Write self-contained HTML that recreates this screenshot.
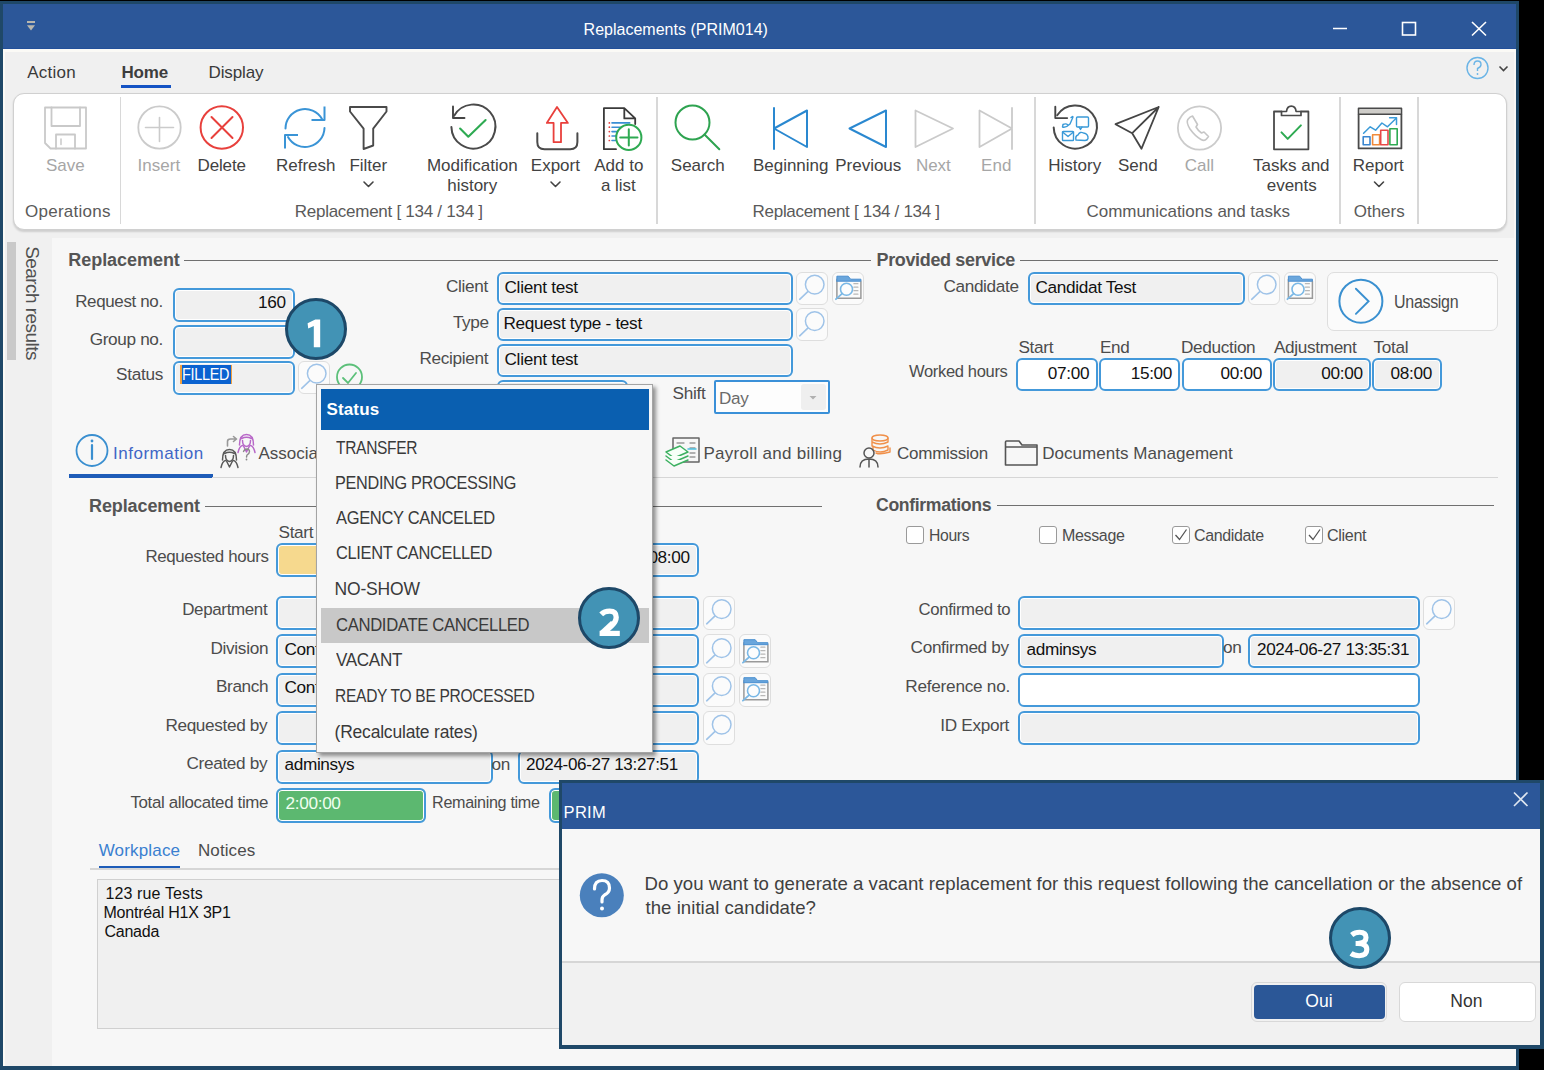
<!DOCTYPE html>
<html><head><meta charset="utf-8">
<style>
*{margin:0;padding:0;box-sizing:border-box}
html,body{width:1544px;height:1070px;overflow:hidden;background:#000}
body{position:relative;font-family:"Liberation Sans",sans-serif}
.a{position:absolute}
.t{position:absolute;white-space:nowrap;line-height:20px;height:20px}
svg{position:absolute;overflow:visible}
.fld{position:absolute;border:2px solid #4499da;border-radius:6px;background:#f0f0f0;box-shadow:inset 0 0 0 1px #fff}
.fw{background:#fff}
.btn{position:absolute;border:1.5px solid #dedede;border-radius:6px;background:#fbfbfb}
.line{position:absolute;height:1.5px;background:#707070}
.badge{position:absolute;width:62px;height:62px;border-radius:50%;background:#4293b5;border:3.5px solid #1d4868;color:#fff;font-weight:bold;font-size:38.5px;line-height:64px;text-align:center}
</style></head><body>
<div class="a" style="left:0;top:1px;width:1519px;height:1069px;background:#1f4868"></div>
<div class="a" style="left:3px;top:4px;width:1513px;height:1062px;background:#f7f7f7"></div>
<div class="a" style="left:3px;top:4px;width:1513px;height:45px;background:#2c5799"></div>
<div class="a" style="left:3px;top:48px;width:1513px;height:1px;background:#23509a"></div>
<div class="a" style="left:3px;top:49px;width:1513px;height:3px;background:#fbfaf6"></div>
<div class="a" style="left:3px;top:52px;width:1511px;height:186px;background:#f0f0f0"></div>
<div class="t" style="left:583.6px;top:19.5px;font-size:16px;color:#fff;letter-spacing:0.01px">Replacements (PRIM014)</div>
<svg style="left:0;top:0" width="1544" height="100">
 <rect x="27" y="21" width="8" height="2" fill="#b9b7ae"/>
 <path d="M27 25.2 L35 25.2 L31 30.4Z" fill="#b9b7ae"/>
 <line x1="1333" y1="28.5" x2="1347" y2="28.5" stroke="#fff" stroke-width="1.5"/>
 <rect x="1402.5" y="22.5" width="13" height="12.5" fill="none" stroke="#fff" stroke-width="1.6"/>
 <path d="M1472 22 L1486 35.5 M1486 22 L1472 35.5" stroke="#fff" stroke-width="1.6"/>
 <circle cx="1477.5" cy="68" r="10.5" fill="none" stroke="#6ab4e6" stroke-width="1.4"/>
 <path d="M1474 65 Q1474 61 1477.5 61 Q1481 61 1481 64.5 Q1481 67 1477.5 68.5 L1477.5 71" fill="none" stroke="#6ab4e6" stroke-width="1.4"/>
 <circle cx="1477.5" cy="74" r="0.9" fill="#6ab4e6"/>
 <path d="M1499.5 66.5 L1503.5 70.5 L1507.5 66.5" fill="none" stroke="#444" stroke-width="1.6"/>
</svg>
<div class="t" style="left:27.2px;top:63.1px;font-size:17px;color:#3a3a3a;letter-spacing:0.24px">Action</div>
<div class="t" style="left:121.4px;top:63.1px;font-size:17px;color:#3d3d3d;font-weight:bold;letter-spacing:-0.13px">Home</div>
<div class="a" style="left:120.5px;top:85px;width:50.5px;height:3px;background:#1553c4"></div>
<div class="t" style="left:208.5px;top:63.1px;font-size:17px;color:#3a3a3a;letter-spacing:-0.12px">Display</div>
<div class="a" style="left:13px;top:92.5px;width:1494px;height:137.5px;background:#fff;border:1.5px solid #d0d0d0;border-radius:11px;box-shadow:0 1.5px 2px rgba(0,0,0,.14)"></div>
<div class="a" style="left:119.5px;top:97px;width:1.5px;height:127px;background:#d8d8d8"></div>
<div class="a" style="left:656px;top:97px;width:1.5px;height:127px;background:#d8d8d8"></div>
<div class="a" style="left:1034px;top:97px;width:1.5px;height:127px;background:#d8d8d8"></div>
<div class="a" style="left:1339px;top:97px;width:1.5px;height:127px;background:#d8d8d8"></div>
<div class="a" style="left:1417px;top:97px;width:1.5px;height:127px;background:#d8d8d8"></div>
<svg style="left:0;top:0" width="1544" height="240" fill="none" stroke-linecap="round" stroke-linejoin="round">
 <!-- save -->
 <path d="M45 107.5 H86 V148.5 H50.5 L45 143 Z" stroke="#c9c9c9" stroke-width="1.8"/>
 <path d="M51.5 107.5 V126 H80 V107.5" stroke="#c9c9c9" stroke-width="1.8"/>
 <path d="M56 148.5 V134.5 H75 V148.5" stroke="#c9c9c9" stroke-width="1.8"/>
 <path d="M61 139 V144.5" stroke="#c9c9c9" stroke-width="1.5"/>
 <!-- insert -->
 <circle cx="159.5" cy="127.5" r="21.2" stroke="#cbcbcb" stroke-width="1.8"/>
 <path d="M145.5 127.5 H173.5 M159.5 117.5 V141.5" stroke="#cbcbcb" stroke-width="1.6"/>
 <!-- delete -->
 <circle cx="221.8" cy="127.5" r="21.2" stroke="#e8403c" stroke-width="2"/>
 <path d="M211.5 117 L232.5 138 M232.5 117 L211.5 138" stroke="#e8403c" stroke-width="2"/>
 <!-- refresh -->
 <path d="M285.5 128.5 A19.5 19.5 0 0 1 322 119" stroke="#3a94d6" stroke-width="2"/>
 <path d="M324.5 106.5 V120 H311.5" stroke="#3a94d6" stroke-width="2" stroke-linecap="butt"/>
 <path d="M324.5 128 A19.5 19.5 0 0 1 288 137" stroke="#3a94d6" stroke-width="2"/>
 <path d="M285 148.5 V135 H298" stroke="#3a94d6" stroke-width="2" stroke-linecap="butt"/>
 <!-- filter -->
 <path d="M350 107 H386.5 V111.5 L373.2 128.7 V145.5 L363.6 149 V128.7 L350 111.5 Z" stroke="#4a4a4a" stroke-width="1.9"/>
 <path d="M364 182 L368.5 186.5 L373 182" stroke="#444" stroke-width="1.6"/>
 <!-- modification history -->
 <path d="M454.3 115.6 A22 22 0 1 1 451.4 127" stroke="#4a4a4a" stroke-width="2"/>
 <path d="M453 106.5 V118 H464.5" stroke="#454545" stroke-width="1.9"/>
 <path d="M460.1 128.6 L468.3 136.7 L485.6 120.1" stroke="#2eaa52" stroke-width="2.1"/>
 <!-- export -->
 <path d="M557 107 L567.9 122.9 H561 V142.2 H553.6 V122.9 H546.8 Z" stroke="#e9403c" stroke-width="1.8"/>
 <path d="M537.3 133.3 V142 Q537.3 149.2 544.5 149.2 H570.2 Q577.4 149.2 577.4 142 V133.3" stroke="#4a4a4a" stroke-width="2"/>
 <path d="M551 182 L555.5 186.5 L560 182" stroke="#444" stroke-width="1.6"/>
 <!-- add to list -->
 <path d="M624.3 108.2 H603.9 V149.2 H616 M635.2 124 V118.4 L624.3 108.2 V118.4 H635.2" stroke="#3a3a3a" stroke-width="1.8"/>
 <path d="M612 122.9 H629.7 M612 127.2 H629.7 M612 131.6 H620 M612 136 H617 M612 140.5 H616" stroke="#3a8fd4" stroke-width="1.6"/>
 <path d="M609.3 122.9 h0.1 M609.3 127.2 h0.1 M609.3 131.6 h0.1 M609.3 136 h0.1 M609.3 140.5 h0.1" stroke="#e84040" stroke-width="1.7"/>
 <circle cx="628.8" cy="137.4" r="12.6" fill="#fff" stroke="#2eaa52" stroke-width="2"/>
 <path d="M620.2 137.4 H637.5 M628.8 129.2 V145.6" stroke="#2eaa52" stroke-width="2"/>
 <!-- search -->
 <circle cx="692.5" cy="122.5" r="17" stroke="#2ea350" stroke-width="2"/>
 <path d="M704.5 134.5 L719.3 149.3" stroke="#2ea350" stroke-width="2"/>
 <!-- beginning -->
 <path d="M774 108 V149" stroke="#2a88d0" stroke-width="2"/>
 <path d="M774 128.5 L807 110.5 V147 Z" stroke="#2a88d0" stroke-width="2"/>
 <!-- previous -->
 <path d="M849.5 128.5 L886 110.5 V147 Z" stroke="#2a88d0" stroke-width="2"/>
 <!-- next -->
 <path d="M953 128.5 L915.5 110.5 V147 Z" stroke="#cacaca" stroke-width="1.8"/>
 <!-- end -->
 <path d="M1012 128.5 L979.5 110.5 V147 Z M1012 108 V149" stroke="#cacaca" stroke-width="1.8"/>
 <!-- history -->
 <path d="M1057.2 115.2 A21.6 21.6 0 1 1 1053.7 127.4" stroke="#4a4a4a" stroke-width="2"/>
 <path d="M1055.3 106.8 V118.1 H1067.2" stroke="#454545" stroke-width="1.9"/>
 <g stroke="#3a9ad8" stroke-width="1.4">
  <rect x="1076.5" y="117" width="12" height="10" rx="1"/>
  <path d="M1079 127 L1080.5 129.5 L1082 127"/>
  <path d="M1073 117 L1070 124 Q1066 128 1062.5 127 L1063 124.5 Q1066 123 1068 125 M1071 117.5 L1072.5 116.5"/>
  <rect x="1062.5" y="131.5" width="11" height="9" rx="0.8"/>
  <path d="M1062.5 132 L1068 136.5 L1073.5 132"/>
  <path d="M1076 140 Q1075 136 1078 135 Q1080 131 1083.5 133 Q1088.5 134 1088 138.5 Q1087.5 140.5 1085 140.5 Z"/>
 </g>
 <!-- send -->
 <path d="M1115.5 124.2 L1158.7 107 L1141.5 148.7 L1132.2 133.2 Z M1132.2 133.2 L1158.7 107" stroke="#454545" stroke-width="1.8"/>
 <!-- call -->
 <circle cx="1199.5" cy="128" r="21.6" stroke="#cbcbcb" stroke-width="1.8"/>
 <path d="M1192.5 116 Q1190 116.5 1187.8 119.5 Q1186 122.5 1190 129 Q1195 136 1201 139.5 Q1204.5 141.5 1206.5 139 L1208.5 136.5 L1204 132 L1201.5 133 Q1198 130.5 1196 127 L1197.5 124.5 Z" stroke="#c6c6c6" stroke-width="1.6"/>
  <!-- tasks -->
 <path d="M1281.5 111.5 H1274 V149.3 H1308.4 V111.5 H1301" stroke="#4a4a4a" stroke-width="1.8"/>
 <path d="M1281.5 111.5 H1286.5 Q1287 106.2 1291.3 106.2 Q1295.6 106.2 1296.1 111.5 H1301 V115.5 H1281.5 Z" stroke="#4a4a4a" stroke-width="1.7"/>
 <path d="M1281.5 132.4 L1287.7 138.9 L1300.9 125.4" stroke="#2eaa52" stroke-width="2"/>
 <!-- report -->
 <rect x="1358.6" y="108.4" width="42.8" height="40" stroke="#4a4a4a" stroke-width="1.8"/>
 <rect x="1359.5" y="109.3" width="41" height="4.8" fill="#cfcdc9" stroke="none"/>
 <path d="M1358.6 114.3 H1401.4" stroke="#4a4a4a" stroke-width="1.6"/>
 <path d="M1363.6 133.3 L1370.2 126.8 L1375.6 130.2 L1381.9 123 L1387.5 126.8 L1396.2 118.2" stroke="#3a9ad8" stroke-width="1.5"/>
 <path d="M1389.6 117.8 H1396.5 V124.4" stroke="#3a9ad8" stroke-width="1.5"/>
 <rect x="1363.2" y="136.8" width="6.8" height="8" stroke="#3a86d0" stroke-width="1.6"/>
 <rect x="1372.6" y="134.8" width="7" height="10" stroke="#f08a3a" stroke-width="1.6"/>
 <rect x="1380.7" y="130.3" width="7.3" height="14.5" stroke="#e84848" stroke-width="1.6"/>
 <rect x="1389.9" y="128.7" width="7.3" height="16.1" stroke="#2eaa52" stroke-width="1.6"/>
 <path d="M1374.5 182 L1379 186.5 L1383.5 182" stroke="#444" stroke-width="1.6"/>
</svg>
<div class="t" style="left:45.9px;top:156.1px;font-size:17px;color:#a6a6a6">Save</div>
<div class="t" style="left:137.6px;top:156.1px;font-size:17px;color:#a6a6a6">Insert</div>
<div class="t" style="left:197.5px;top:156.1px;font-size:17px;color:#424242;letter-spacing:-0.14px">Delete</div>
<div class="t" style="left:276.0px;top:156.1px;font-size:17px;color:#424242">Refresh</div>
<div class="t" style="left:349.4px;top:156.1px;font-size:17px;color:#424242">Filter</div>
<div class="t" style="left:426.9px;top:156.1px;font-size:17px;color:#424242">Modification</div>
<div class="t" style="left:530.8px;top:156.1px;font-size:17px;color:#424242">Export</div>
<div class="t" style="left:594.2px;top:156.1px;font-size:17px;color:#424242">Add to</div>
<div class="t" style="left:670.8px;top:156.1px;font-size:17px;color:#424242">Search</div>
<div class="t" style="left:752.9px;top:156.1px;font-size:17px;color:#424242">Beginning</div>
<div class="t" style="left:835.2px;top:156.1px;font-size:17px;color:#424242">Previous</div>
<div class="t" style="left:915.9px;top:156.1px;font-size:17px;color:#a6a6a6">Next</div>
<div class="t" style="left:981.1px;top:156.1px;font-size:17px;color:#a6a6a6">End</div>
<div class="t" style="left:1048.3px;top:156.1px;font-size:17px;color:#424242">History</div>
<div class="t" style="left:1117.9px;top:156.1px;font-size:17px;color:#424242">Send</div>
<div class="t" style="left:1184.7px;top:156.1px;font-size:17px;color:#a6a6a6">Call</div>
<div class="t" style="left:1253.0px;top:156.1px;font-size:17px;color:#424242">Tasks and</div>
<div class="t" style="left:1352.8px;top:156.1px;font-size:17px;color:#424242">Report</div>
<div class="t" style="left:447.2px;top:175.6px;font-size:17px;color:#424242">history</div>
<div class="t" style="left:600.9px;top:175.6px;font-size:17px;color:#424242">a list</div>
<div class="t" style="left:1266.7px;top:175.6px;font-size:17px;color:#424242">events</div>
<div class="t" style="left:25.0px;top:201.6px;font-size:17px;color:#5a5a5a;letter-spacing:0.26px">Operations</div>
<div class="t" style="left:294.8px;top:201.6px;font-size:17px;color:#5a5a5a;letter-spacing:-0.27px">Replacement [ 134 / 134 ]</div>
<div class="t" style="left:752.6px;top:201.6px;font-size:17px;color:#5a5a5a;letter-spacing:-0.30px">Replacement [ 134 / 134 ]</div>
<div class="t" style="left:1086.5px;top:201.6px;font-size:17px;color:#5a5a5a;letter-spacing:-0.03px">Communications and tasks</div>
<div class="t" style="left:1353.7px;top:201.6px;font-size:17px;color:#5a5a5a">Others</div>
<div class="a" style="left:3px;top:238px;width:49px;height:828px;background:#f0f0f0"></div>
<div class="a" style="left:3px;top:52px;width:1.5px;height:1014px;background:#fbfaf6"></div>
<div class="a" style="left:7px;top:242px;width:8.5px;height:118px;background:#c9c9c9"></div>
<div class="a" style="left:32.2px;top:302.5px;width:0;height:0"><div style="position:absolute;left:-70px;top:-10px;width:140px;height:20px;text-align:center;transform:rotate(90deg);color:#505050;font-size:19px;line-height:20px;white-space:nowrap;letter-spacing:-0.55px">Search results</div></div>
<div class="t" style="left:68.3px;top:249.8px;font-size:18px;color:#555;font-weight:bold;letter-spacing:-0.05px">Replacement</div>
<div class="line" style="left:184px;top:259.5px;width:687px"></div>
<div class="t" style="left:876.5px;top:249.8px;font-size:18px;color:#555;font-weight:bold;letter-spacing:-0.35px">Provided service</div>
<div class="line" style="left:1020px;top:259.5px;width:478px"></div>
<div class="t" style="left:74.2px;top:291.4px;font-size:17.2px;color:#4c4c4c;letter-spacing:-0.35px;transform:scaleX(0.987);transform-origin:88.4px 50%">Request no.</div>
<div class="t" style="left:89.7px;top:328.5px;font-size:17.2px;color:#4c4c4c;letter-spacing:-0.35px">Group no.</div>
<div class="t" style="left:116.1px;top:364.0px;font-size:17.2px;color:#4c4c4c;letter-spacing:-0.32px">Status</div>
<div class="fld" style="left:172.5px;top:287.6px;width:122.5px;height:34.4px"></div>
<div class="fld" style="left:172.5px;top:324.9px;width:122.5px;height:33.8px"></div>
<div class="fld" style="left:172.5px;top:360.7px;width:122.5px;height:34.3px"></div>
<div class="t" style="left:258.0px;top:292.0px;font-size:17.2px;color:#111;letter-spacing:-0.35px">160</div>
<div class="a" style="left:181px;top:365px;width:50px;height:19px;background:#0a62d0"></div>
<div class="a" style="left:180px;top:365px;width:1.5px;height:19px;background:#f0a040"></div><div class="a" style="left:230.5px;top:365px;width:1.5px;height:19px;background:#f0a040"></div>
<div class="t" style="left:182.0px;top:365.0px;font-size:16px;color:#fff;letter-spacing:-0.35px;transform:scaleX(0.903);transform-origin:1.0px 50%">FILLED</div>
<div class="btn" style="left:298px;top:361px;width:32px;height:33px"></div>
<div class="t" style="left:446.0px;top:276.0px;font-size:17.2px;color:#4c4c4c;letter-spacing:-0.31px">Client</div>
<div class="t" style="left:452.9px;top:312.0px;font-size:17.2px;color:#4c4c4c;letter-spacing:-0.35px">Type</div>
<div class="t" style="left:419.4px;top:348.0px;font-size:17.2px;color:#4c4c4c;letter-spacing:-0.33px">Recipient</div>
<div class="fld" style="left:497px;top:271.5px;width:296px;height:33.4px"></div>
<div class="fld" style="left:497px;top:307.8px;width:296px;height:33.3px"></div>
<div class="fld" style="left:497px;top:344px;width:296px;height:33.3px"></div>
<div class="fld" style="left:497px;top:380.2px;width:131px;height:33.5px"></div>
<div class="t" style="left:504.5px;top:276.5px;font-size:17.2px;color:#111;letter-spacing:-0.29px">Client test</div>
<div class="t" style="left:503.5px;top:312.5px;font-size:17.2px;color:#111;letter-spacing:-0.31px">Request type - test</div>
<div class="t" style="left:504.5px;top:349.0px;font-size:17.2px;color:#111;letter-spacing:-0.29px">Client test</div>
<div class="btn" style="left:796px;top:271.5px;width:32px;height:33.4px"></div>
<div class="btn" style="left:832px;top:271.5px;width:32px;height:33.4px"></div>
<div class="btn" style="left:796px;top:307.8px;width:32px;height:33.3px"></div>
<div class="t" style="left:672.6px;top:383.0px;font-size:17.2px;color:#4c4c4c;letter-spacing:-0.30px">Shift</div>
<div class="a" style="left:714.2px;top:380px;width:115.4px;height:33.7px;border:2px solid #3a90d8;border-radius:2px;background:#fdfdfd"></div>
<div class="a" style="left:801px;top:383.5px;width:24.5px;height:26.5px;background:#efefef;border-radius:3px"></div>
<svg style="left:0;top:0" width="1" height="1"><path d="M809.5 396 L816.5 396 L813 399.5Z" fill="#b0b0b0"/></svg>
<div class="t" style="left:718.5px;top:387.5px;font-size:17.2px;color:#6a6a6a;letter-spacing:-0.35px;transform:scaleX(0.994);transform-origin:1.0px 50%">Day</div>
<div class="t" style="left:943.4px;top:275.5px;font-size:17.2px;color:#4c4c4c;letter-spacing:-0.34px">Candidate</div>
<div class="fld" style="left:1028px;top:271.5px;width:217px;height:33.5px"></div>
<div class="t" style="left:1035.5px;top:276.5px;font-size:17.2px;color:#111;letter-spacing:-0.33px">Candidat Test</div>
<div class="btn" style="left:1248px;top:271.5px;width:32px;height:33.5px"></div>
<div class="btn" style="left:1283.5px;top:271.5px;width:32px;height:33.5px"></div>
<div class="btn" style="left:1327.4px;top:272.3px;width:170.5px;height:59px;border-radius:7px"></div>
<div class="t" style="left:1393.5px;top:292.4px;font-size:18px;color:#4c4c4c;letter-spacing:-0.35px;transform:scaleX(0.888);transform-origin:1.0px 50%">Unassign</div>
<div class="t" style="left:905.4px;top:360.5px;font-size:17.2px;color:#4c4c4c;letter-spacing:-0.35px;transform:scaleX(0.961);transform-origin:102.2px 50%">Worked hours</div>
<div class="t" style="left:1018.4px;top:337.0px;font-size:17.2px;color:#4c4c4c;letter-spacing:-0.32px">Start</div>
<div class="t" style="left:1100.0px;top:337.0px;font-size:17.2px;color:#4c4c4c;letter-spacing:-0.35px;transform:scaleX(0.995);transform-origin:1.0px 50%">End</div>
<div class="t" style="left:1181.0px;top:337.0px;font-size:17.2px;color:#4c4c4c;letter-spacing:-0.34px">Deduction</div>
<div class="t" style="left:1274.0px;top:337.0px;font-size:17.2px;color:#4c4c4c;letter-spacing:-0.35px">Adjustment</div>
<div class="t" style="left:1373.6px;top:337.0px;font-size:17.2px;color:#4c4c4c;letter-spacing:-0.32px">Total</div>
<div class="fld" style="left:1016px;top:357.5px;width:82px;height:33.5px;background:#fff"></div>
<div class="fld" style="left:1099px;top:357.5px;width:81px;height:33.5px;background:#fff"></div>
<div class="fld" style="left:1181.5px;top:357.5px;width:90px;height:33.5px;background:#fff"></div>
<div class="fld" style="left:1273px;top:357.5px;width:98px;height:33.5px"></div>
<div class="fld" style="left:1372px;top:357.5px;width:70px;height:33.5px"></div>
<div class="t" style="left:1047.8px;top:362.5px;font-size:17.2px;color:#111;letter-spacing:-0.33px">07:00</div>
<div class="t" style="left:1130.7px;top:362.5px;font-size:17.2px;color:#111;letter-spacing:-0.33px">15:00</div>
<div class="t" style="left:1220.6px;top:362.5px;font-size:17.2px;color:#111;letter-spacing:-0.33px">00:00</div>
<div class="t" style="left:1321.3px;top:362.5px;font-size:17.2px;color:#111;letter-spacing:-0.33px">00:00</div>
<div class="t" style="left:1390.6px;top:362.5px;font-size:17.2px;color:#111;letter-spacing:-0.33px">08:00</div>
<svg style="left:0;top:0" width="1544" height="1070" fill="none" stroke-linecap="round" stroke-linejoin="round">
 <circle cx="92" cy="450.5" r="15.5" stroke="#3a8fd0" stroke-width="1.8"/>
 <path d="M92 445 V459" stroke="#3a8fd0" stroke-width="2.2"/>
 <circle cx="92" cy="441" r="1.4" fill="#3a8fd0"/>
 <!-- association -->
<g stroke="#5a5a5a" stroke-width="1.5" transform="translate(0 0)">
  <path d="M222.5 460 Q222.5 449.5 229.5 449.5 Q236.5 449.5 236.5 460"/>
  <path d="M224.5 453.5 Q229.5 450.8 234.5 453.5"/>
  <path d="M225.5 455.5 Q225.5 461 229.5 461.5 Q233.5 461 233.5 455.5"/>
  <path d="M221 467.5 Q222.5 461 225.5 460.5 M238 467.5 Q236.5 461 233.5 460.5 M226.5 461 L229.5 467 L232.5 461"/>
 </g><g stroke="#b868c8" stroke-width="1.5" transform="translate(17 -15)">
  <path d="M222.5 460 Q222.5 449.5 229.5 449.5 Q236.5 449.5 236.5 460"/>
  <path d="M224.5 453.5 Q229.5 450.8 234.5 453.5"/>
  <path d="M225.5 455.5 Q225.5 461 229.5 461.5 Q233.5 461 233.5 455.5"/>
  <path d="M221 467.5 Q222.5 461 225.5 460.5 M238 467.5 Q236.5 461 233.5 460.5 M226.5 461 L229.5 467 L232.5 461"/>
 </g>
 <path d="M227.5 446 V441.5 Q227.5 439 230.5 439 H236 M233.5 436.5 L236.5 439 L233.5 441.5" stroke="#999" stroke-width="1.6"/>
 <path d="M243.5 451.5 Q244.5 449 247 449 Q249.5 449.2 249.5 451.5 Q249.5 453.5 247 455 L246.5 457" stroke="#8a8a8a" stroke-width="1.4"/>
 <circle cx="246.5" cy="459.5" r="0.9" fill="#8a8a8a"/>
<!-- payroll -->
 <rect x="673" y="438" width="26" height="24" stroke="#666" stroke-width="1.5"/>
 <path d="M677 443 H684 M690 443 H695 M690 448 H695 M690 453 H695 M690 457 H695" stroke="#999" stroke-width="1.3"/>
 <path d="M688 449 H696" stroke="#4ac0e0" stroke-width="1.5"/>
 <g stroke="#3cb060" stroke-width="1.5" fill="#f7fff8">
  <path d="M666 452 L680 446 L688 452 L674 458Z"/>
  <path d="M666 456 L674 462 L688 456"/>
  <path d="M666 460 L674 466 L688 460"/>
 </g>
 <!-- commission -->
 <g stroke="#f0904a" stroke-width="1.4">
  <ellipse cx="880" cy="438" rx="8" ry="3"/>
  <path d="M872 438 V442 Q880 446 888 442 V438 M872 442 V446 Q880 450 888 446 M873 446 V450 Q880 454 888 450 V446 M876 453 Q880 455 890 452 V448"/>
 </g>
 <g stroke="#555" stroke-width="1.5">
  <circle cx="869" cy="453" r="5"/>
  <path d="M860 467 Q860 459 869 459 Q878 459 878 467 M869 460 V467"/>
 </g>
 <!-- folder -->
 <path d="M1005.5 447 V465 H1037 V445 H1022 L1019 441 H1006.5 Q1005.5 441 1005.5 442 V447 H1037" stroke="#555" stroke-width="1.6"/>
</svg>
<div class="t" style="left:113.0px;top:443.6px;font-size:17px;color:#3f66c6;letter-spacing:0.51px">Information</div>
<div class="a" style="left:68.5px;top:474px;width:144px;height:4px;background:#1e5cb8"></div>
<div class="a" style="left:212px;top:476.5px;width:1286px;height:1.5px;background:#d6d6d6"></div>
<div class="t" style="left:258.4px;top:443.6px;font-size:17px;color:#4c4c4c">Association</div>
<div class="t" style="left:703.4px;top:443.6px;font-size:17px;color:#4c4c4c;letter-spacing:0.30px">Payroll and billing</div>
<div class="t" style="left:897.0px;top:443.6px;font-size:17px;color:#4c4c4c;letter-spacing:-0.25px">Commission</div>
<div class="t" style="left:1042.3px;top:443.6px;font-size:17px;color:#4c4c4c;letter-spacing:0.03px">Documents Management</div>
<div class="t" style="left:89.0px;top:495.8px;font-size:18px;color:#555;font-weight:bold;letter-spacing:-0.10px">Replacement</div>
<div class="line" style="left:205px;top:505.5px;width:617px"></div>
<div class="t" style="left:876.0px;top:494.8px;font-size:18px;color:#555;font-weight:bold;letter-spacing:-0.35px;transform:scaleX(0.980);transform-origin:0.0px 50%">Confirmations</div>
<div class="line" style="left:997px;top:504.5px;width:497px"></div>
<div class="t" style="left:278.5px;top:522.0px;font-size:17.2px;color:#4c4c4c;letter-spacing:-0.32px">Start</div>
<div class="t" style="left:142.6px;top:546.0px;font-size:17.2px;color:#4c4c4c;letter-spacing:-0.35px;transform:scaleX(0.981);transform-origin:125.4px 50%">Requested hours</div>
<div class="t" style="left:181.1px;top:599.0px;font-size:17.2px;color:#4c4c4c;letter-spacing:-0.35px;transform:scaleX(0.986);transform-origin:86.9px 50%">Department</div>
<div class="t" style="left:210.4px;top:638.0px;font-size:17.2px;color:#4c4c4c;letter-spacing:-0.29px">Division</div>
<div class="t" style="left:215.9px;top:676.0px;font-size:17.2px;color:#4c4c4c;letter-spacing:-0.35px">Branch</div>
<div class="t" style="left:165.4px;top:714.5px;font-size:17.2px;color:#4c4c4c;letter-spacing:-0.35px">Requested by</div>
<div class="t" style="left:186.5px;top:753.0px;font-size:17.2px;color:#4c4c4c;letter-spacing:-0.34px">Created by</div>
<div class="t" style="left:128.1px;top:791.5px;font-size:17.2px;color:#4c4c4c;letter-spacing:-0.35px;transform:scaleX(0.983);transform-origin:139.9px 50%">Total allocated time</div>
<div class="fld" style="left:276px;top:542.5px;width:140px;height:34.3px;background:#f6d98e"></div>
<div class="fld" style="left:560px;top:542.5px;width:139px;height:34.3px"></div>
<div class="t" style="left:648.4px;top:547.0px;font-size:17.2px;color:#111;letter-spacing:-0.33px">08:00</div>
<div class="fld" style="left:276px;top:595.7px;width:422.5px;height:34.4px"></div>
<div class="fld" style="left:276px;top:634.1px;width:422.5px;height:34.4px"></div>
<div class="fld" style="left:276px;top:672.7px;width:422.5px;height:34.3px"></div>
<div class="fld" style="left:276px;top:711.1px;width:422.5px;height:34.4px"></div>
<div class="t" style="left:284.5px;top:639.0px;font-size:17.2px;color:#111;letter-spacing:-0.32px">Confirmation</div>
<div class="t" style="left:284.5px;top:677.0px;font-size:17.2px;color:#111;letter-spacing:-0.32px">Confirmation</div>
<div class="fld" style="left:276px;top:749.6px;width:217px;height:34.4px"></div>
<div class="t" style="left:284.5px;top:754.0px;font-size:17.2px;color:#111;letter-spacing:-0.35px">adminsys</div>
<div class="t" style="left:491.5px;top:753.5px;font-size:17.2px;color:#4c4c4c;letter-spacing:-0.35px">on</div>
<div class="fld" style="left:517.5px;top:749.6px;width:181px;height:34.4px"></div>
<div class="t" style="left:526.4px;top:754.0px;font-size:17.2px;color:#111;letter-spacing:-0.35px;transform:scaleX(0.993);transform-origin:0.0px 50%">2024-06-27 13:27:51</div>
<div class="fld" style="left:276px;top:788.2px;width:149.5px;height:34.4px;background:#5cb870"></div>
<div class="t" style="left:285.5px;top:792.5px;font-size:17.2px;color:#f0fff0;letter-spacing:-0.32px">2:00:00</div>
<div class="t" style="left:432.4px;top:791.5px;font-size:17.2px;color:#4c4c4c;letter-spacing:-0.35px;transform:scaleX(0.939);transform-origin:1.0px 50%">Remaining time</div>
<div class="fld" style="left:549px;top:788.2px;width:150px;height:34.4px;background:#5cb870"></div>
<div class="btn" style="left:703px;top:595.9px;width:32px;height:34px"></div>
<div class="btn" style="left:703px;top:634.3px;width:32px;height:34px"></div>
<div class="btn" style="left:739px;top:634.3px;width:32px;height:34px"></div>
<div class="btn" style="left:703px;top:672.9px;width:32px;height:34px"></div>
<div class="btn" style="left:739px;top:672.9px;width:32px;height:34px"></div>
<div class="btn" style="left:703px;top:711.3px;width:32px;height:34px"></div>
<div class="a" style="left:905.5px;top:525.5px;width:18px;height:18.5px;border:1.4px solid #9a9a9a;border-radius:3px;background:#fff"></div>
<div class="a" style="left:1039px;top:525.5px;width:18px;height:18.5px;border:1.4px solid #9a9a9a;border-radius:3px;background:#fff"></div>
<div class="a" style="left:1171.5px;top:525.5px;width:18px;height:18.5px;border:1.4px solid #9a9a9a;border-radius:3px;background:#fff"></div>
<div class="a" style="left:1305px;top:525.5px;width:18px;height:18.5px;border:1.4px solid #9a9a9a;border-radius:3px;background:#fff"></div>
<svg style="left:0;top:0" width="1" height="1" fill="none"><path d="M1175.5 535 L1179.5 539.5 L1186.5 529.5 M1309 535 L1313 539.5 L1320 529.5" stroke="#555" stroke-width="1.3"/></svg>
<div class="t" style="left:928.6px;top:524.9px;font-size:16.3px;color:#4c4c4c;letter-spacing:-0.35px;transform:scaleX(0.966);transform-origin:1.0px 50%">Hours</div>
<div class="t" style="left:1061.6px;top:524.9px;font-size:16.3px;color:#4c4c4c;letter-spacing:-0.35px;transform:scaleX(0.982);transform-origin:1.0px 50%">Message</div>
<div class="t" style="left:1194.4px;top:524.9px;font-size:16.3px;color:#4c4c4c;letter-spacing:-0.35px;transform:scaleX(0.981);transform-origin:0.0px 50%">Candidate</div>
<div class="t" style="left:1327.4px;top:524.9px;font-size:16.3px;color:#4c4c4c;letter-spacing:-0.35px;transform:scaleX(0.991);transform-origin:0.0px 50%">Client</div>
<div class="t" style="left:915.5px;top:599.0px;font-size:17.2px;color:#4c4c4c;letter-spacing:-0.35px;transform:scaleX(0.973);transform-origin:94.0px 50%">Confirmed to</div>
<div class="t" style="left:910.6px;top:637.0px;font-size:17.2px;color:#4c4c4c;letter-spacing:-0.34px">Confirmed by</div>
<div class="t" style="left:905.3px;top:675.5px;font-size:17.2px;color:#4c4c4c;letter-spacing:-0.25px">Reference no.</div>
<div class="t" style="left:940.3px;top:715.0px;font-size:17.2px;color:#4c4c4c;letter-spacing:-0.33px">ID Export</div>
<div class="fld" style="left:1018px;top:595.7px;width:402px;height:34.4px"></div>
<div class="btn" style="left:1423px;top:595.9px;width:32px;height:34px"></div>
<div class="fld" style="left:1018px;top:634.1px;width:206px;height:34.4px"></div>
<div class="t" style="left:1026.5px;top:638.5px;font-size:17.2px;color:#111;letter-spacing:-0.35px">adminsys</div>
<div class="t" style="left:1223.0px;top:636.5px;font-size:17.2px;color:#4c4c4c;letter-spacing:-0.35px">on</div>
<div class="fld" style="left:1248px;top:634.1px;width:172px;height:34.4px"></div>
<div class="t" style="left:1257.0px;top:638.5px;font-size:17.2px;color:#111;letter-spacing:-0.35px;transform:scaleX(0.995);transform-origin:0.0px 50%">2024-06-27 13:35:31</div>
<div class="fld" style="left:1018px;top:672.7px;width:402px;height:34.3px;background:#fff"></div>
<div class="fld" style="left:1018px;top:711.1px;width:402px;height:34.4px"></div>
<div class="t" style="left:98.7px;top:841.1px;font-size:17px;color:#3a7fd0;letter-spacing:0.17px">Workplace</div>
<div class="a" style="left:98.5px;top:865.5px;width:81px;height:4px;background:#1e5cb8"></div>
<div class="a" style="left:89.5px;top:868px;width:1000px;height:1.5px;background:#d6d6d6"></div>
<div class="t" style="left:198.0px;top:841.1px;font-size:17px;color:#4c4c4c;letter-spacing:0.09px">Notices</div>
<div class="a" style="left:97px;top:879px;width:800px;height:150px;background:#f0f0f0;border:1.5px solid #d0d0d0"></div>
<div class="t" style="left:105.5px;top:883.5px;font-size:16px;color:#111;letter-spacing:0.12px">123 rue Tests</div>
<div class="t" style="left:103.5px;top:903.0px;font-size:16px;color:#111;letter-spacing:-0.22px">Montréal H1X 3P1</div>
<div class="t" style="left:104.5px;top:922.0px;font-size:16px;color:#111;letter-spacing:-0.25px">Canada</div>
<svg style="left:0;top:0" width="1544" height="1070" fill="none" stroke-linecap="round"><circle cx="316.7" cy="373.6" r="9.3" stroke="#9fc3e8" stroke-width="1.5"/><path d="M309.8 380.7 L301.7 388.3" stroke="#9fc3e8" stroke-width="1.6"/><circle cx="814.7" cy="284.6" r="9.3" stroke="#9fc3e8" stroke-width="1.5"/><path d="M807.8 291.7 L799.7 299.3" stroke="#9fc3e8" stroke-width="1.6"/><circle cx="814.7" cy="321.1" r="9.3" stroke="#9fc3e8" stroke-width="1.5"/><path d="M807.8 328.2 L799.7 335.8" stroke="#9fc3e8" stroke-width="1.6"/><circle cx="1266.7" cy="284.6" r="9.3" stroke="#9fc3e8" stroke-width="1.5"/><path d="M1259.8 291.7 L1251.7 299.3" stroke="#9fc3e8" stroke-width="1.6"/><circle cx="721.7" cy="609.1" r="9.3" stroke="#9fc3e8" stroke-width="1.5"/><path d="M714.8 616.2 L706.7 623.8" stroke="#9fc3e8" stroke-width="1.6"/><circle cx="721.7" cy="648.1" r="9.3" stroke="#9fc3e8" stroke-width="1.5"/><path d="M714.8 655.2 L706.7 662.8" stroke="#9fc3e8" stroke-width="1.6"/><circle cx="721.7" cy="686.1" r="9.3" stroke="#9fc3e8" stroke-width="1.5"/><path d="M714.8 693.2 L706.7 700.8" stroke="#9fc3e8" stroke-width="1.6"/><circle cx="721.7" cy="724.6" r="9.3" stroke="#9fc3e8" stroke-width="1.5"/><path d="M714.8 731.7 L706.7 739.3" stroke="#9fc3e8" stroke-width="1.6"/><circle cx="1441.7" cy="609.1" r="9.3" stroke="#9fc3e8" stroke-width="1.5"/><path d="M1434.8 616.2 L1426.7 623.8" stroke="#9fc3e8" stroke-width="1.6"/><path d="M836.9 279.2 V298.2 H860.9 V281.2" stroke="#9a9a9a" stroke-width="1.5"/><path d="M836.9 280.7 V276.2 H848.2 L850.6 279.2 H860.9 V281.2 H836.9Z" fill="#6aa6dc" stroke="#4a8fd0" stroke-width="1"/><path d="M853.9 283.7 H857.9 M853.9 287.2 H857.9 M853.9 290.7 H857.9 M853.9 294.2 H857.9" stroke="#b8b8b8" stroke-width="1.3"/><circle cx="846.5" cy="289.2" r="6" fill="#fff" fill-opacity=".6" stroke="#7ab8e6" stroke-width="1.6"/><path d="M842.1 293.7 L835.9 299.2" stroke="#7ab8e6" stroke-width="1.8"/><path d="M1288.4 279.2 V298.2 H1312.4 V281.2" stroke="#9a9a9a" stroke-width="1.5"/><path d="M1288.4 280.7 V276.2 H1299.7 L1302.1 279.2 H1312.4 V281.2 H1288.4Z" fill="#6aa6dc" stroke="#4a8fd0" stroke-width="1"/><path d="M1305.4 283.7 H1309.4 M1305.4 287.2 H1309.4 M1305.4 290.7 H1309.4 M1305.4 294.2 H1309.4" stroke="#b8b8b8" stroke-width="1.3"/><circle cx="1298.0" cy="289.2" r="6" fill="#fff" fill-opacity=".6" stroke="#7ab8e6" stroke-width="1.6"/><path d="M1293.6 293.7 L1287.4 299.2" stroke="#7ab8e6" stroke-width="1.8"/><path d="M743.9 642.7 V661.7 H767.9 V644.7" stroke="#9a9a9a" stroke-width="1.5"/><path d="M743.9 644.2 V639.7 H755.2 L757.6 642.7 H767.9 V644.7 H743.9Z" fill="#6aa6dc" stroke="#4a8fd0" stroke-width="1"/><path d="M760.9 647.2 H764.9 M760.9 650.7 H764.9 M760.9 654.2 H764.9 M760.9 657.7 H764.9" stroke="#b8b8b8" stroke-width="1.3"/><circle cx="753.5" cy="652.7" r="6" fill="#fff" fill-opacity=".6" stroke="#7ab8e6" stroke-width="1.6"/><path d="M749.1 657.2 L742.9 662.7" stroke="#7ab8e6" stroke-width="1.8"/><path d="M743.9 680.7 V699.7 H767.9 V682.7" stroke="#9a9a9a" stroke-width="1.5"/><path d="M743.9 682.2 V677.7 H755.2 L757.6 680.7 H767.9 V682.7 H743.9Z" fill="#6aa6dc" stroke="#4a8fd0" stroke-width="1"/><path d="M760.9 685.2 H764.9 M760.9 688.7 H764.9 M760.9 692.2 H764.9 M760.9 695.7 H764.9" stroke="#b8b8b8" stroke-width="1.3"/><circle cx="753.5" cy="690.7" r="6" fill="#fff" fill-opacity=".6" stroke="#7ab8e6" stroke-width="1.6"/><path d="M749.1 695.2 L742.9 700.7" stroke="#7ab8e6" stroke-width="1.8"/>
 <circle cx="1360.9" cy="301.2" r="21.5" stroke="#3a90d0" stroke-width="2"/>
 <path d="M1355.9 288.7 L1368.6 301.2 L1355.9 313.8" stroke="#3a90d0" stroke-width="1.9"/>
 <circle cx="349.5" cy="377" r="12.5" stroke="#5cc07a" stroke-width="1.8"/>
 <path d="M343 378 L348 383 L356 373" stroke="#5cc07a" stroke-width="1.8"/>
</svg>
<div class="a" style="left:315.8px;top:383.8px;width:337.2px;height:369.7px;background:#f7f7f7;border:1.3px solid #a4a4a4;box-shadow:3px 3px 4px rgba(0,0,0,.42)"></div>
<div class="a" style="left:320.5px;top:389px;width:328.5px;height:40.5px;background:#0a5fb0"></div>
<div class="t" style="left:326.4px;top:399.6px;font-size:17px;color:#fff;font-weight:bold;letter-spacing:0.16px">Status</div>
<div class="a" style="left:320.5px;top:607.5px;width:328.5px;height:35px;background:#c8c8c8"></div>
<div class="t" style="left:335.5px;top:437.7px;font-size:17.5px;color:#3a3a3a;letter-spacing:-0.35px;transform:scaleX(0.888);transform-origin:0.0px 50%">TRANSFER</div>
<div class="t" style="left:334.5px;top:472.7px;font-size:17.5px;color:#3a3a3a;letter-spacing:-0.35px;transform:scaleX(0.928);transform-origin:1.0px 50%">PENDING PROCESSING</div>
<div class="t" style="left:335.5px;top:508.1px;font-size:17.5px;color:#3a3a3a;letter-spacing:-0.35px;transform:scaleX(0.943);transform-origin:0.0px 50%">AGENCY CANCELED</div>
<div class="t" style="left:335.5px;top:543.4px;font-size:17.5px;color:#3a3a3a;letter-spacing:-0.35px;transform:scaleX(0.938);transform-origin:0.0px 50%">CLIENT CANCELLED</div>
<div class="t" style="left:334.5px;top:579.4px;font-size:17.5px;color:#3a3a3a;letter-spacing:-0.17px">NO-SHOW</div>
<div class="t" style="left:335.5px;top:614.9px;font-size:17.5px;color:#3a3a3a;letter-spacing:-0.35px;transform:scaleX(0.952);transform-origin:0.0px 50%">CANDIDATE CANCELLED</div>
<div class="t" style="left:335.5px;top:650.4px;font-size:17.5px;color:#3a3a3a;letter-spacing:-0.35px;transform:scaleX(0.977);transform-origin:0.0px 50%">VACANT</div>
<div class="t" style="left:334.5px;top:685.9px;font-size:17.5px;color:#3a3a3a;letter-spacing:-0.35px;transform:scaleX(0.889);transform-origin:1.0px 50%">READY TO BE PROCESSED</div>
<div class="t" style="left:334.5px;top:722.0px;font-size:17.5px;color:#3a3a3a;letter-spacing:-0.20px">(Recalculate rates)</div>
<div class="a" style="left:559px;top:780px;width:985px;height:269px;background:#1f4868"></div>
<div class="a" style="left:562px;top:783px;width:978px;height:262px;background:#f7f7f7"></div>
<div class="a" style="left:562px;top:783px;width:978px;height:46px;background:#2c5799"></div>
<div class="a" style="left:562px;top:961px;width:978px;height:84px;background:#f1f1f1;border-top:2px solid #d6d6d6"></div>
<div class="t" style="left:563.6px;top:801.8px;font-size:16.5px;color:#fff;letter-spacing:0.30px">PRIM</div>
<svg style="left:0;top:0" width="1" height="1"><path d="M1514 792.5 L1527.5 806 M1527.5 792.5 L1514 806" stroke="#dfe6f0" stroke-width="1.6"/>
<circle cx="601.8" cy="895.3" r="22" fill="#4a80bc"/>
<path d="M594.5 889 Q594.5 880.5 602 880.5 Q609.5 880.5 609.5 888 Q609.5 892.5 604.5 895 Q602 896.5 602 900 V902" fill="none" stroke="#fff" stroke-width="3.2" stroke-linecap="round"/>
<circle cx="602" cy="908.5" r="2" fill="#fff"/></svg>
<div class="t" style="left:644.5px;top:874.2px;font-size:18.6px;color:#404040;letter-spacing:0.03px">Do you want to generate a vacant replacement for this request following the cancellation or the absence of</div>
<div class="t" style="left:645.5px;top:897.5px;font-size:18.6px;color:#404040;letter-spacing:0.04px">the initial candidate?</div>
<div class="a" style="left:1250.5px;top:981.5px;width:136px;height:40px;border:1.5px solid #d8d8d8;border-radius:6px;background:#f1f1f1"></div>
<div class="a" style="left:1253.5px;top:984.5px;width:131px;height:34.5px;border-radius:4px;background:#2b5797"></div>
<div class="t" style="left:1305.3px;top:991.4px;font-size:17.5px;color:#fff">Oui</div>
<div class="a" style="left:1399px;top:981.5px;width:136.5px;height:40px;border:1.5px solid #d8d8d8;border-radius:6px;background:#fff"></div>
<div class="t" style="left:1450.3px;top:991.4px;font-size:17.5px;color:#333">Non</div>
<div class="badge" style="left:284.9px;top:297.6px"></div>
<div class="badge" style="left:577.6px;top:586.5px"></div>
<div class="badge" style="left:1328.6px;top:907.1px"></div>
<svg style="left:0;top:0" width="1" height="1">
<path d="M315.3 319.5 H320.2 V347.2 H313.8 V326 L308.2 328.6 L307.6 323.2 Z" fill="#fff"/>
<g transform="translate(599.6 608.4)" fill="none" stroke="#fff" stroke-width="5.3">
 <path d="M1.6 6 Q4.8 2.7 10 2.7 Q16.6 2.7 16.6 8.8 Q16.6 13 12 17.5 L3 25.5"/>
</g>
<rect x="599.6" y="630.8" width="20.2" height="5.2" fill="#fff"/>
<path d="M600.2 630.9 L611 621 L614.5 623.8 L606 631 Z" fill="#fff"/>
<g transform="translate(1350.4 929.8)" fill="none" stroke="#fff" stroke-width="5.1">
 <path d="M1.3 5.2 Q4.6 2.5 9.2 2.5 Q15.6 2.5 15.6 7.8 Q15.6 13.5 7.5 13.7 H5.2 M7.5 13.7 Q16.4 13.7 16.4 19.8 Q16.4 25.9 8.8 25.9 Q3.8 25.9 0.6 23.6"/>
</g>
</svg>
</body></html>
